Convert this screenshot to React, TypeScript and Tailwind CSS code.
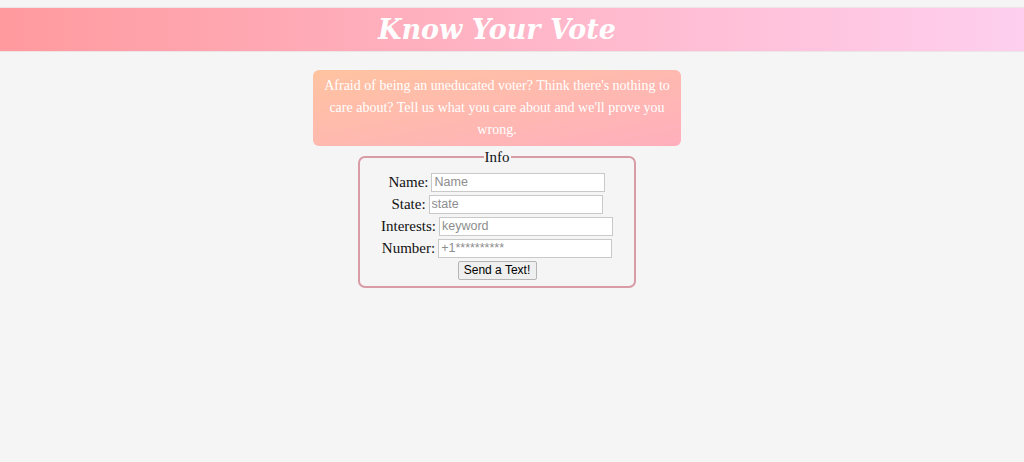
import React from "react";

const serif = { fontFamily: '"Liberation Serif", "Times New Roman", serif' };

function Row({ label, placeholder }: { label: string; placeholder: string }) {
  return (
    <div className="flex h-[22px] items-center justify-center gap-[3px]">
      <label className="text-[15px] leading-[22px] text-[#111]">{label}</label>
      <input
        placeholder={placeholder}
        className="h-[19px] w-[174px] border border-[#c9c9c9] bg-white px-[2px] text-[12.5px] leading-[17px] text-black outline-none placeholder:text-[#8d8d8d] [font-family:'Liberation_Sans',Arial,sans-serif]"
      />
    </div>
  );
}

export default function App() {
  return (
    <div className="min-h-[462px] bg-[#f5f5f5] pt-[7px]" style={serif}>
      <div className="border-y border-[#ece4e5] bg-gradient-to-r from-[#ff9a9e] to-[#fecfef]">
        <div className="flex h-[43px] w-[994px] items-center justify-center">
          <h1 className="text-[27px] font-bold italic leading-none text-white [font-family:'DejaVu_Serif',Georgia,serif]">
            Know Your Vote
          </h1>
        </div>
      </div>
      <div className="flex w-[994px] flex-col items-center">
        <div className="mt-[18px] w-[368px] rounded-[6px] bg-gradient-to-br from-[#ffc3a0] to-[#ffafbd] px-[8px] py-[5px] text-center text-[14px] leading-[22px] text-white">
          Afraid of being an uneducated voter? Think there's nothing to care about? Tell us what you care about and we'll prove you wrong.
        </div>
        <fieldset className="mt-[4px] w-[278px] rounded-[7px] border-2 border-[#d99ba6] px-2 pb-[5px] pt-[7px]">
          <legend className="mx-auto px-[1px] text-[15px] leading-[14px] text-[#111]">Info</legend>
          <Row label="Name:" placeholder="Name" />
          <Row label="State:" placeholder="state" />
          <Row label="Interests:" placeholder="keyword" />
          <Row label="Number:" placeholder="+1**********" />
          <div className="flex h-[22px] items-center justify-center">
            <button className="h-[19px] w-[79px] rounded-[2px] border border-[#b5b5b5] bg-[#efefef] text-[12px] leading-[17px] text-black [font-family:'Liberation_Sans',Arial,sans-serif]">
              Send a Text!
            </button>
          </div>
        </fieldset>
      </div>
    </div>
  );
}
